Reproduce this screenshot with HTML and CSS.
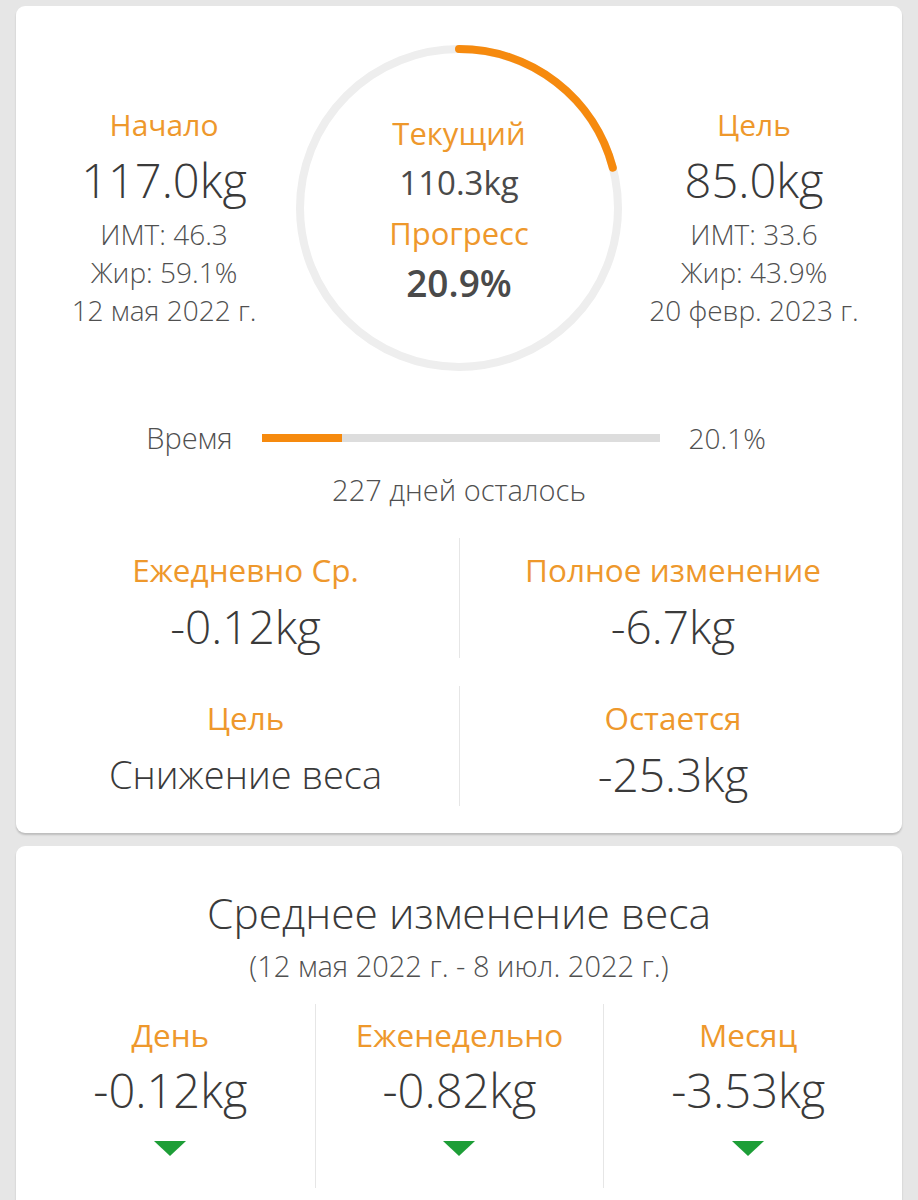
FILE: index.html
```html
<!DOCTYPE html>
<html lang="ru">
<head>
  <meta charset="UTF-8" />
  <meta name="viewport" content="width=device-width, initial-scale=1" />
  <title>Прогресс веса</title>
  <link rel="stylesheet" href="styles.css">
</head>
<body>
  <main class="page">
    <section class="card summary">
      <div class="goal-row">
        <div class="point">
          <div class="label">Начало</div>
          <div class="weight">117.0kg</div>
          <div class="meta">ИМТ: 46.3</div>
          <div class="meta">Жир: 59.1%</div>
          <div class="meta">12 мая 2022 г.</div>
        </div>

        <div class="ring">
          <svg width="326" height="326" viewBox="0 0 326 326">
            <circle class="ring-track" cx="163" cy="163" r="159" />
            <circle class="ring-value" cx="163" cy="163" r="159"
                    stroke-dasharray="208.8 999" transform="rotate(-90 163 163)" />
          </svg>
          <div class="ring-text">
            <div class="label">Текущий</div>
            <div class="current">110.3kg</div>
            <div class="label">Прогресс</div>
            <div class="percent">20.9%</div>
          </div>
        </div>

        <div class="point">
          <div class="label">Цель</div>
          <div class="weight">85.0kg</div>
          <div class="meta">ИМТ: 33.6</div>
          <div class="meta">Жир: 43.9%</div>
          <div class="meta">20 февр. 2023 г.</div>
        </div>
      </div>

      <div class="time-row">
        <span class="time-label">Время</span>
        <div class="bar"><div class="bar-fill" style="width: 20.1%"></div></div>
        <span class="time-value">20.1%</span>
      </div>
      <div class="days-left">227 дней осталось</div>

      <div class="stats">
        <div class="stat">
          <div class="stat-label">Ежедневно Ср.</div>
          <div class="stat-value">-0.12kg</div>
        </div>
        <div class="stat divided">
          <div class="stat-label">Полное изменение</div>
          <div class="stat-value">-6.7kg</div>
        </div>
        <div class="stat">
          <div class="stat-label">Цель</div>
          <div class="stat-text">Снижение веса</div>
        </div>
        <div class="stat divided">
          <div class="stat-label">Остается</div>
          <div class="stat-value">-25.3kg</div>
        </div>
      </div>
    </section>

    <section class="card average">
      <h2>Среднее изменение веса</h2>
      <div class="range">(12 мая 2022 г. - 8 июл. 2022 г.)</div>
      <div class="periods">
        <div class="period">
          <div class="stat-label">День</div>
          <div class="stat-value">-0.12kg</div>
          <span class="down"></span>
        </div>
        <div class="period divided">
          <div class="stat-label">Еженедельно</div>
          <div class="stat-value">-0.82kg</div>
          <span class="down"></span>
        </div>
        <div class="period divided">
          <div class="stat-label">Месяц</div>
          <div class="stat-value">-3.53kg</div>
          <span class="down"></span>
        </div>
      </div>
    </section>
  </main>
</body>
</html>
```

FILE: styles.css
```css
body {
  font-family: "Open Sans", "Noto Sans", sans-serif;
  font-weight: 350;
  background: #e6e6e6;
  color: #3a3a3a;
  margin: 0;
  padding: 0;
}
.page {
  padding: 6px 16px 0;
  display: flex;
  flex-direction: column;
  gap: 13px;
}
.card {
  background: white;
  border-radius: 9px;
  box-shadow: 0 2px 2px rgba(0,0,0,0.18);
}
.label,
.stat-label {
  color: #ee982c;
  font-size: 30px;
  font-weight: 400;
  line-height: 40px;
}

/* top block */
.summary {
  padding: 39px 16px 27px;
}
.goal-row {
  display: flex;
  align-items: center;
}
.point {
  flex: 1;
  text-align: center;
  padding-top: 18px;
}
.weight {
  font-size: 47px;
  line-height: 70px;
}
.meta {
  font-size: 28px;
  line-height: 38px;
  color: #505050;
}
.ring {
  position: relative;
  width: 326px;
  height: 326px;
}
.ring svg {
  display: block;
}
.ring-track {
  fill: none;
  stroke: #eeeeee;
  stroke-width: 8;
}
.ring-value {
  fill: none;
  stroke: #f68a0e;
  stroke-width: 8;
  stroke-linecap: round;
}
.ring-text {
  position: absolute;
  inset: 0;
  display: flex;
  flex-direction: column;
  align-items: center;
  justify-content: center;
}
.ring-text .label {
  font-size: 31px;
  line-height: 50px;
}
.current {
  font-size: 33px;
  line-height: 50px;
  font-weight: 500;
  color: #4a4a4a;
}
.percent {
  font-size: 37px;
  line-height: 50px;
  font-weight: 600;
  color: #4a4a4a;
}

/* time bar */
.time-row {
  display: flex;
  align-items: center;
  justify-content: center;
  gap: 29px;
  margin-top: 49px;
  padding-right: 6px;
  font-size: 28px;
  line-height: 36px;
  color: #505050;
}
.time-label {
  font-size: 29px;
}
.bar {
  width: 398px;
  height: 8px;
  background: #dddddd;
}
.bar-fill {
  height: 100%;
  background: #f68a0e;
}
.days-left {
  text-align: center;
  font-size: 29px;
  line-height: 40px;
  margin-top: 14px;
  color: #505050;
}

/* stats grid */
.stats {
  display: grid;
  grid-template-columns: 1fr 1fr;
  row-gap: 28px;
  margin-top: 28px;
}
.stat {
  height: 120px;
  box-sizing: border-box;
  padding-top: 12px;
  display: flex;
  flex-direction: column;
  align-items: center;
}
.stat-label {
  font-size: 31.5px;
}
.stat-value {
  font-size: 46px;
  line-height: 72px;
}
.stat-text {
  font-size: 38px;
  line-height: 72px;
}
.divided {
  border-left: 1px solid #e6e6e6;
}

/* averages */
.average {
  padding: 40px 10px 30px;
  text-align: center;
}
.average h2 {
  font-size: 42.5px;
  font-weight: 350;
  line-height: 54px;
  margin: 0;
}
.range {
  font-size: 29px;
  line-height: 40px;
  color: #505050;
  margin-top: 6px;
}
.periods {
  display: grid;
  grid-template-columns: repeat(3, 1fr);
  margin-top: 18px;
}
.period {
  display: flex;
  flex-direction: column;
  align-items: center;
  padding: 11px 0 32px;
}
.period .stat-value {
  font-size: 47px;
  line-height: 70px;
}
.down {
  width: 0;
  height: 0;
  margin-top: 16px;
  border-left: 16px solid transparent;
  border-right: 16px solid transparent;
  border-top: 15px solid #1d9e37;
}
```
